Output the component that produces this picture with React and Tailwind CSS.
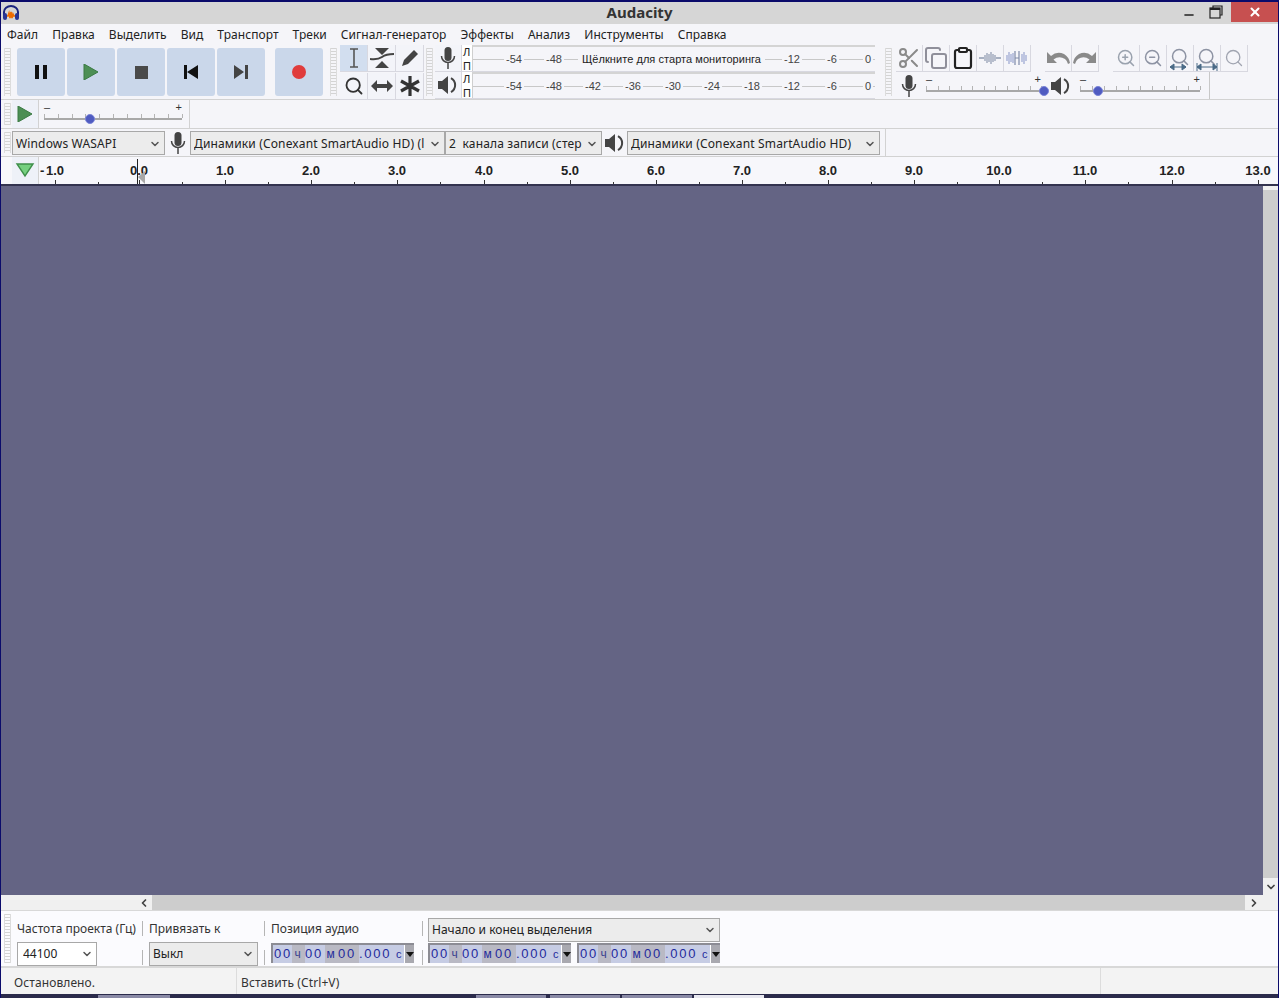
import React from "react";
import { ChevronDown, ChevronLeft, ChevronRight, Copy, Clipboard, Scissors, Search, ZoomIn, ZoomOut, Minus, X } from "lucide-react";

const MENU = ["Файл", "Правка", "Выделить", "Вид", "Транспорт", "Треки", "Сигнал-генератор", "Эффекты", "Анализ", "Инструменты", "Справка"];
const RULER = [
  [55, "1.0"], [139, "0.0"], [225, "1.0"], [311, "2.0"], [397, "3.0"], [484, "4.0"], [570, "5.0"], [656, "6.0"],
  [742, "7.0"], [828, "8.0"], [914, "9.0"], [999, "10.0"], [1085, "11.0"], [1172, "12.0"], [1258, "13.0"],
];
const METER_FULL = [[514, "-54"], [554, "-48"], [593, "-42"], [633, "-36"], [673, "-30"], [712, "-24"], [752, "-18"], [792, "-12"], [832, "-6"], [868, "0"]];
const METER_TOP = [[514, "-54"], [554, "-48"], [792, "-12"], [832, "-6"], [868, "0"]];

function Grip({ className = "" }) {
  return (
    <div className={`w-[7px] self-stretch my-[3px] border-x border-[#dcdcdc] bg-[repeating-linear-gradient(to_bottom,#d4d4d4_0,#d4d4d4_1px,transparent_1px,transparent_3px)] ${className}`} />
  );
}

function AudacityLogo() {
  return (
    <svg width="18" height="16" viewBox="0 0 18 16">
      <path d="M2 10 V7 a7 6 0 0 1 14 0 V10" fill="none" stroke="#1a237e" strokeWidth="2" />
      <rect x="1" y="8" width="4" height="7" rx="2" fill="#283593" />
      <rect x="13" y="8" width="4" height="7" rx="2" fill="#283593" />
      <path d="M5 11 h1 l1 -3 l1 5 l1 -6 l1 6 l1 -4 l1 2 h1" fill="none" stroke="#ef6c00" strokeWidth="1.6" />
    </svg>
  );
}

function TitleBar() {
  return (
    <div className="h-[24px] relative flex items-center justify-between bg-[#d6d6d6] border-t-2 border-[#0b0b6b]">
      <div className="pl-[1px]"><AudacityLogo /></div>
      <div className="absolute inset-x-0 top-0 text-center text-[15px] leading-[20px] font-bold text-[#333] font-['Noto_Sans',sans-serif]">Audacity</div>
      <div className="flex items-center">
        <Minus className="w-[14px] h-[14px] mr-[13px] mt-[3px] text-[#222]" strokeWidth={2.5} />
        <svg width="14" height="14" viewBox="0 0 14 14" className="mr-[8px] mb-[3px]">
          <rect x="1" y="3" width="10" height="10" fill="none" stroke="#222" strokeWidth="1.2" />
          <rect x="1" y="3" width="10" height="2" fill="#222" />
          <path d="M4 3 V1 H13 V10 H11" fill="none" stroke="#222" strokeWidth="1.2" />
        </svg>
        <div className="w-[47px] h-[20px] mb-[2px] flex items-center justify-center bg-[#c75050]">
          <X className="w-[14px] h-[14px] text-white" strokeWidth={3.5} />
        </div>
      </div>
    </div>
  );
}

function MenuBar() {
  return (
    <div className="h-[21px] flex items-center pl-[6px] gap-[14px] bg-[#f5f5f9] text-[12px] text-[#222] tracking-[0.05px]">
      {MENU.map(m => <span key={m}>{m}</span>)}
    </div>
  );
}

function TransportButton({ children, className = "" }) {
  return (
    <div className={`w-[48px] h-[48px] rounded-[3px] bg-[#cad7ea] flex items-center justify-center ${className}`}>
      {children}
    </div>
  );
}

function TransportBar() {
  return (
    <div className="flex items-center w-[329px] pl-[3px]">
      <Grip className="mr-[6px]" />
      <div className="flex gap-[2px]">
        <TransportButton>
          <svg width="14" height="14" viewBox="0 0 14 14"><path d="M1 0h4v14H1zM9 0h4v14H9z" fill="#111" /></svg>
        </TransportButton>
        <TransportButton>
          <svg width="16" height="16" viewBox="0 0 16 16"><path d="M1 0 L15 8 L1 16 Z" fill="#4d8f55" stroke="#3a7a42" /></svg>
        </TransportButton>
        <TransportButton>
          <svg width="13" height="13" viewBox="0 0 13 13"><rect width="13" height="13" fill="#4a4a4a" /></svg>
        </TransportButton>
        <TransportButton>
          <svg width="14" height="14" viewBox="0 0 14 14"><path d="M0 0h3v14H0zM14 0v14L3 7z" fill="#111" /></svg>
        </TransportButton>
        <TransportButton>
          <svg width="14" height="14" viewBox="0 0 14 14"><path d="M0 0v14l10-7zM11 0h3v14h-3z" fill="#444" /></svg>
        </TransportButton>
      </div>
      <TransportButton className="ml-[10px]">
        <div className="w-[14px] h-[14px] rounded-full bg-[#e03c3c]" />
      </TransportButton>
    </div>
  );
}

function ToolCell({ children, active }) {
  return (
    <div className={`w-[28px] h-[27px] flex items-center justify-center border-r border-b border-[#d8d8e0] ${active ? "bg-[#d2deef]" : "bg-[#f3f4f9]"}`}>
      {children}
    </div>
  );
}

function ToolsBar() {
  return (
    <div className="flex w-[95px]">
      <Grip className="mr-[3px]" />
      <div className="grid grid-cols-3 w-[84px] gap-y-[1px] self-start">
        <ToolCell active>
          <svg width="12" height="20" viewBox="0 0 12 20"><path d="M2 1h8M2 19h8M6 1v18" stroke="#555" strokeWidth="1.6" fill="none" /></svg>
        </ToolCell>
        <ToolCell>
          <svg width="24" height="22" viewBox="0 0 24 22">
            <path d="M5 1h14l-7 7zM5 21h14l-7-7z" fill="#444" />
            <path d="M0 12 Q8 13 12 10 T24 7" stroke="#444" strokeWidth="2" fill="none" />
          </svg>
        </ToolCell>
        <ToolCell>
          <svg width="20" height="20" viewBox="0 0 20 20"><path d="M2 18 L4 12 L14 2 L18 6 L8 16 Z" fill="#444" /></svg>
        </ToolCell>
        <ToolCell><Search className="w-[20px] h-[20px] text-[#333]" strokeWidth={2.2} /></ToolCell>
        <ToolCell>
          <svg width="22" height="12" viewBox="0 0 22 12"><path d="M0 6l6-6v4h10V0l6 6-6 6V8H6v4z" fill="#444" /></svg>
        </ToolCell>
        <ToolCell>
          <svg width="22" height="22" viewBox="0 0 22 22"><path d="M11 1v20M2 6l18 10M20 6L2 16" stroke="#333" strokeWidth="3.2" /></svg>
        </ToolCell>
      </div>
    </div>
  );
}

function MicIcon({ className = "" }) {
  return (
    <svg width="16" height="22" viewBox="0 0 16 22" className={className}>
      <rect x="4.5" y="0" width="7" height="14" rx="3.5" fill="#444" />
      <path d="M1.5 9 a6.5 6.5 0 0 0 13 0 M8 16 v6" stroke="#444" strokeWidth="1.5" fill="none" />
    </svg>
  );
}

function SpeakerIcon({ className = "" }) {
  return (
    <svg width="20" height="20" viewBox="0 0 20 20" className={className}>
      <path d="M0 6h4l6-5v18l-6-5H0z" fill="#444" />
      <path d="M13 3 a8 8 0 0 1 0 14" stroke="#444" strokeWidth="2" fill="none" />
    </svg>
  );
}

function MeterRow({ icon, labels, hint }) {
  return (
    <div className="h-[27px] flex border-b border-[#d8d8e0]">
      <div className="w-[27px] flex items-center justify-center bg-[#f3f4f9] border-r border-[#d8d8e0]">{icon}</div>
      <div className="w-[10px] pl-[1px] flex flex-col text-[11px] leading-[14px] text-[#222] font-['Liberation_Sans',sans-serif] bg-white">
        <span>Л</span>
        <span>П</span>
      </div>
      <div className="relative w-[403px] border-t-2 border-[#d4d4d4] border-l border-l-[#cfcfcf]">
        <div className="absolute left-0 right-0 top-[12px] h-px bg-[#c8c8c8]" />
        {labels.map(([x, t]) => (
          <span key={x} style={{ left: x - 473 }} className="absolute top-[5px] -translate-x-1/2 px-[2px] bg-[#f5f5f9] text-[11px] leading-[14px] text-[#444] font-['Liberation_Sans',sans-serif]">{t}</span>
        ))}
        {hint && (
          <span className="absolute top-[5px] left-[105px] px-[4px] bg-[#f5f5f9] text-[11px] leading-[14px] tracking-[0.05px] text-[#222] font-['Liberation_Sans',sans-serif] whitespace-nowrap">{hint}</span>
        )}
      </div>
    </div>
  );
}

function EditCell({ children, className = "" }) {
  return (
    <div className={`w-[27px] h-[27px] flex items-center justify-center border-r border-b border-[#d8d8e0] ${className}`}>{children}</div>
  );
}

function ZoomFit({ variant }) {
  return (
    <div className="relative w-[22px] h-[22px]">
      <Search className="w-[20px] h-[20px] text-[#8d93a3] absolute left-[1px] top-0" strokeWidth={1.8} />
      {variant === "sel" && (
        <svg width="18" height="8" viewBox="0 0 18 8" className="absolute left-0 bottom-[-2px]"><path d="M1 4h16M1 4l4-3v6zM17 4l-4-3v6z" stroke="#4a6a86" fill="#4a6a86" /></svg>
      )}
      {variant === "fit" && (
        <svg width="22" height="8" viewBox="0 0 22 8" className="absolute left-0 bottom-[-2px]"><path d="M1 0v8M21 0v8M1 4h20M1 4l4-3v6zM21 4l-4-3v6z" stroke="#4a6a86" fill="#4a6a86" /></svg>
      )}
    </div>
  );
}

function UndoArrow({ flip }) {
  return (
    <svg width="24" height="16" viewBox="0 0 24 16" className={flip ? "-scale-x-100" : ""}>
      <path d="M1 2 L1 13 L11 13 L7.5 9.5 Q13 5.5 19 9 Q21 10.5 22 14 L24 13 Q23 7 18 4 Q11 0.5 5 6 Z" fill="#8a8a8a" />
    </svg>
  );
}

function EditBar() {
  return (
    <div className="flex flex-col">
      <div className="h-[27px] flex items-center">
        <EditCell><Scissors className="w-[24px] h-[24px] text-[#8a8a8a]" strokeWidth={2} /></EditCell>
        <EditCell><Copy className="w-[24px] h-[24px] text-[#8f8f9a]" strokeWidth={2} /></EditCell>
        <EditCell><Clipboard className="w-[24px] h-[24px] text-[#222]" strokeWidth={2.2} /></EditCell>
        <EditCell>
          <svg width="22" height="14" viewBox="0 0 22 14"><path d="M0 7h5M17 7h5" stroke="#8f9ab0" strokeWidth="1.5" /><path d="M6 4v6M8 2v10M10 3v8M12 1v12M14 3v8M16 4v6" stroke="#8f9ab0" strokeWidth="1.2" /></svg>
        </EditCell>
        <EditCell>
          <svg width="22" height="16" viewBox="0 0 22 16"><path d="M1 5v6M3 2v12M5 4v8M7 3v10M16 4v8M18 2v12M20 5v6" stroke="#9aa6d0" strokeWidth="1.2" /><path d="M9 8h4M9 1v14M13 1v14" stroke="#7f8aa8" strokeWidth="1.2" /></svg>
        </EditCell>
        <div className="w-[14px]" />
        <EditCell><UndoArrow /></EditCell>
        <EditCell><UndoArrow flip /></EditCell>
        <div className="w-[14px]" />
        <EditCell><ZoomIn className="w-[20px] h-[20px] text-[#9aa2ae]" strokeWidth={1.8} /></EditCell>
        <EditCell><ZoomOut className="w-[20px] h-[20px] text-[#8d93a3]" strokeWidth={1.8} /></EditCell>
        <EditCell><ZoomFit variant="sel" /></EditCell>
        <EditCell><ZoomFit variant="fit" /></EditCell>
        <EditCell><Search className="w-[20px] h-[20px] text-[#a0a4b0]" strokeWidth={1.6} /></EditCell>
      </div>
      <div className="h-[27px] flex items-center">
        <MicIcon className="ml-[5px] mr-[9px]" />
        <Slider width={115} thumb={118} />
        <SpeakerIcon className="ml-[10px] mr-[9px]" />
        <Slider width={120} thumb={18} />
        <div className="ml-[9px] h-full w-px bg-[#c8c8c8]" />
      </div>
    </div>
  );
}

function Slider({ width, thumb }) {
  const ticks = Array.from({ length: 11 }, (_, i) => Math.round(i * (width / 10)));
  return (
    <div className="relative h-[24px]" style={{ width }}>
      <span className="absolute left-0 top-[-1px] text-[11px] leading-[12px] text-[#333] font-['Liberation_Sans',sans-serif]">–</span>
      <span className="absolute right-0 top-[-1px] text-[11px] leading-[12px] text-[#333] font-['Liberation_Sans',sans-serif]">+</span>
      <div className="absolute left-0 right-0 top-[16px] h-[2px] bg-[#a8a8a8]" />
      {ticks.map(x => <div key={x} style={{ left: x }} className="absolute top-[12px] w-px h-[4px] bg-[#b4b4b4]" />)}
      <div style={{ left: thumb - 5 }} className="absolute top-[12px] w-[10px] h-[10px] rounded-full bg-[#4f5bc0] border border-[#7a84d8]" />
    </div>
  );
}

function SelectBox({ children, width, white, className = "text-[12px] tracking-[0.15px] pt-[2px]" }) {
  return (
    <div style={{ width }} className={`h-[24px] shrink-0 flex items-center pl-[3px] pr-[3px] border border-[#a8a8a8] text-[#222] whitespace-pre overflow-hidden ${white ? "bg-white" : "bg-[#ececec]"} ${className}`}>
      <span className="flex-1 min-w-0 overflow-hidden">{children}</span>
      <ChevronDown className="w-[12px] h-[12px] shrink-0 text-[#555]" strokeWidth={3} />
    </div>
  );
}

function DeviceBar() {
  return (
    <div className="h-[28px] flex items-center bg-[#f5f5f9] border-b border-[#d2d2d2] pl-[3px]">
      <Grip className="mr-[1px]" />
      <SelectBox width={153}>Windows WASAPI</SelectBox>
      <div className="w-[25px] flex justify-center"><MicIcon /></div>
      <SelectBox width={255}>Динамики (Conexant SmartAudio HD) (l</SelectBox>
      <SelectBox width={157}>2  канала записи (стер</SelectBox>
      <div className="w-[25px] flex justify-center"><SpeakerIcon /></div>
      <SelectBox width={253}>Динамики (Conexant SmartAudio HD)</SelectBox>
      <div className="ml-[5px] self-stretch w-px bg-[#d2d2d2]" />
    </div>
  );
}

function Ruler() {
  return (
    <div className="h-[29px] flex bg-[#f7f7fb] border-b-2 border-[#33334f]">
      <div className="w-[27px] ml-[11px] flex items-start justify-center pt-[6px] bg-[#eef1f8] border-r border-[#d2d2d2]">
        <svg width="20" height="16" viewBox="0 0 20 16"><path d="M2 1 H18 L10 13 Z" fill="#75d07f" stroke="#3f8f4a" strokeWidth="1.4" /></svg>
      </div>
      <div className="relative flex-1">
        <span className="absolute left-[1px] top-[7px] text-[13px] leading-[14px] font-bold text-[#222] font-['Liberation_Sans',sans-serif]">-</span>
        {RULER.map(([x, t]) => (
          <React.Fragment key={x}>
            <span style={{ left: x - 39 }} className="absolute top-[7px] -translate-x-1/2 text-[13px] leading-[14px] font-bold text-[#222] font-['Liberation_Sans',sans-serif] whitespace-pre">{t}</span>
            <div style={{ left: x - 39 }} className="absolute bottom-0 w-px h-[4px] bg-[#333]" />
            <div style={{ left: x + 43 - 39 }} className="absolute bottom-0 w-px h-[2px] bg-[#333]" />
          </React.Fragment>
        ))}
        <div style={{ left: 137 - 39 }} className="absolute top-[2px] bottom-0 w-px bg-[#222]" />
        <svg width="8" height="13" viewBox="0 0 8 13" style={{ left: 138 - 39 }} className="absolute bottom-0"><path d="M7 0v13L0 6z" fill="#a8a8a8" /></svg>
      </div>
    </div>
  );
}

function TimeField({ width = 143 }) {
  const seg = "h-full flex items-center";
  return (
    <div style={{ width }} className="h-[20px] shrink-0 flex bg-[#b9b9c4] border-l-2 border-t-2 border-[#8c8c94] font-['Liberation_Sans',sans-serif] text-[13px] text-[#1f2a9c] tracking-[1.7px] overflow-hidden">
      <span className={`${seg} bg-[#c6cce4] pl-[1px] w-[19px]`}>00</span>
      <span className={`${seg} bg-[#b9b9c4] w-[13px] justify-center text-[12px] text-[#3d4490]`}>ч</span>
      <span className={`${seg} bg-[#c6cce4] w-[20px]`}>00</span>
      <span className={`${seg} bg-[#b9b9c4] w-[13px] justify-center text-[12px] text-[#1f2a9c]`}>м</span>
      <span className={`${seg} bg-[#b9b9c4] w-[21px]`}>00</span>
      <span className={`${seg} bg-[#c6cce4] flex-1`}>.000</span>
      <span className={`${seg} bg-[#c6cce4] text-[11px] w-[8px]`}>с</span>
      <span className="w-[10px] h-full flex items-center justify-center bg-[#a9a9b0] border-l border-white">
        <svg width="8" height="5" viewBox="0 0 8 5"><path d="M0 0h8L4 5z" fill="#111" /></svg>
      </span>
    </div>
  );
}

function Divider({ className = "" }) {
  return <div className={`w-px h-[15px] bg-[#b5b5b5] ${className}`} />;
}

function SelectionBar() {
  return (
    <div className="h-[57px] flex bg-[#fbfbfe] border-b-2 border-[#d8d8d8] pl-[3px] text-[12px] text-[#333] whitespace-nowrap">
      <Grip className="mr-[6px]" />
      <div className="w-[125px] pt-[8px]">
        <div className="h-[23px] leading-[20px]">Частота проекта (Гц)</div>
        <SelectBox width={80} white className="pl-[5px] text-[12px]">44100</SelectBox>
      </div>
      <div className="w-[7px] pt-[10px]"><Divider /><Divider className="mt-[14px]" /></div>
      <div className="w-[115px] pt-[8px]">
        <div className="h-[23px] leading-[20px]">Привязать к</div>
        <SelectBox width={109} className="text-[12px]">Выкл</SelectBox>
      </div>
      <div className="w-[7px] pt-[10px]"><Divider /><Divider className="mt-[14px]" /></div>
      <div className="w-[151px] pt-[8px]">
        <div className="h-[24px] leading-[20px]">Позиция аудио</div>
        <TimeField />
      </div>
      <div className="w-[6px] pt-[10px]"><Divider /><Divider className="mt-[14px]" /></div>
      <div className="w-[292px] pt-[7px]">
        <SelectBox width={292} className="text-[12px]">Начало и конец выделения</SelectBox>
        <div className="flex gap-[6px] mt-[1px]">
          <TimeField />
          <TimeField />
        </div>
      </div>
    </div>
  );
}

function StatusBar() {
  return (
    <div className="h-[26px] flex items-center bg-[#f3f3f3] text-[12px] text-[#333] tracking-[0.1px]">
      <div className="w-[236px] pl-[13px] pt-[4px] h-full flex items-center border-r border-[#dcdcdc]">Остановлено.</div>
      <div className="flex-1 pl-[4px] pt-[4px] h-full flex items-center border-r border-[#dcdcdc]">Вставить (Ctrl+V)</div>
      <div className="w-[177px]" />
    </div>
  );
}

export default function App() {
  return (
    <div className="w-[1279px] h-[998px] overflow-hidden flex flex-col bg-[#f5f5f9] border-x border-[#0b0b6b] font-['Noto_Sans',sans-serif]">
      <TitleBar />
      <MenuBar />
      <div className="h-[55px] shrink-0 flex bg-[#f5f5f9] border-b border-[#d2d2d2]">
        <TransportBar />
        <ToolsBar />
        <div className="flex w-[460px] pl-[1px]">
          <Grip className="mr-[2px]" />
          <div className="flex flex-col">
            <MeterRow icon={<MicIcon />} labels={METER_TOP} hint="Щёлкните для старта мониторинга" />
            <MeterRow icon={<SpeakerIcon />} labels={METER_FULL} />
          </div>
        </div>
        <Grip className="mr-[4px]" />
        <EditBar />
      </div>
      <div className="h-[29px] shrink-0 flex items-center bg-[#f5f5f9] border-b border-[#d2d2d2] pl-[3px]">
        <Grip className="mr-[1px]" />
        <div className="w-[27px] h-full flex items-center justify-center bg-[#eef1f8] border-r border-[#d2d2d2]">
          <svg width="16" height="16" viewBox="0 0 16 16"><path d="M1 0 L15 8 L1 16 Z" fill="#4d8f55" stroke="#3a7a42" /></svg>
        </div>
        <div className="ml-[5px]"><Slider width={138} thumb={46} /></div>
        <div className="ml-[7px] self-stretch w-px bg-[#d2d2d2]" />
      </div>
      <DeviceBar />
      <Ruler />
      <div className="flex-1 flex min-h-0">
        <div className="flex-1 bg-[#646484]" />
        <div className="w-[15px] flex flex-col bg-[#f0f0f0]">
          <div className="h-[4px]" />
          <div className="flex-1 bg-[#cdcdcd]" />
          <div className="h-[17px] flex items-center justify-center"><ChevronDown className="w-[12px] h-[12px] text-[#444]" strokeWidth={3.5} /></div>
        </div>
      </div>
      <div className="h-[16px] shrink-0 flex items-center bg-[#f0f0f0] border-b border-[#d8d8d8]">
        <div className="w-[135px]" />
        <div className="w-[16px] flex justify-center"><ChevronLeft className="w-[12px] h-[12px] text-[#444]" strokeWidth={3.5} /></div>
        <div className="w-[1093px] h-full bg-[#cdcdcd]" />
        <div className="w-[18px] flex justify-center"><ChevronRight className="w-[12px] h-[12px] text-[#444]" strokeWidth={3.5} /></div>
      </div>
      <SelectionBar />
      <StatusBar />
      <div className="h-[4px] shrink-0 flex bg-[#2b2b4b]">
        <div className="ml-[97px] mt-[1px] w-[72px] bg-[#8a8aa6]" />
        <div className="ml-[306px] mt-[1px] w-[70px] bg-[#8a8aa6]" />
        <div className="ml-[4px] mt-[1px] w-[70px] bg-[#8a8aa6]" />
        <div className="ml-[2px] mt-[1px] w-[70px] bg-[#8a8aa6]" />
        <div className="ml-[2px] mt-[1px] w-[70px] bg-[#e8e8f0]" />
      </div>
    </div>
  );
}
